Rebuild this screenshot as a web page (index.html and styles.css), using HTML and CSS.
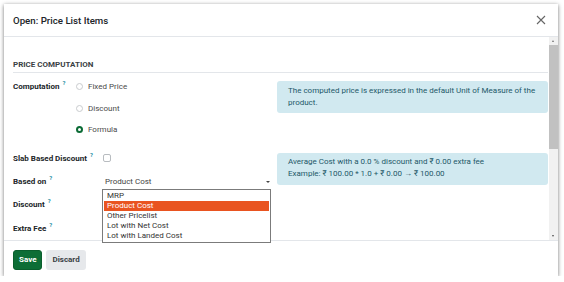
FILE: index.html
```html
<!DOCTYPE html>
<html lang="en">

<head>
  <meta charset="UTF-8">
  <title>Open: Price List Items</title>
  <link rel="stylesheet" href="styles.css">
</head>

<body>
  <div class="dialog">
    <header class="dialog-header">
      <h4 class="dialog-title">Open: Price List Items</h4>
      <button class="close-btn" aria-label="Close">
        <svg width="10" height="10" viewBox="0 0 10 10">
          <path d="M1 1 L9 9 M9 1 L1 9" stroke="#666" stroke-width="1.1" fill="none" />
        </svg>
      </button>
    </header>

    <div class="dialog-body">
      <main class="body-content">
        <div class="separator">Price Computation</div>

        <div class="group group-compute">
          <div class="fields">
            <div class="label-cell">Computation <sup class="help">?</sup></div>
            <div class="radio-list">
              <label class="radio"><span class="radio-dot"></span>Fixed Price</label>
              <label class="radio"><span class="radio-dot"></span>Discount</label>
              <label class="radio"><span class="radio-dot checked"></span>Formula</label>
            </div>
          </div>
          <div class="alert">
            The computed price is expressed in the default Unit of Measure of the product.
          </div>
        </div>

        <div class="group group-formula">
          <div class="fields form-grid">
            <div class="label-cell">Slab Based Discount <sup class="help">?</sup></div>
            <div class="value-cell"><span class="checkbox"></span></div>

            <div class="label-cell">Based on <sup class="help">?</sup></div>
            <div class="value-cell">
              <div class="select">Product Cost<span class="caret"></span></div>
            </div>

            <div class="label-cell">Discount <sup class="help">?</sup></div>
            <div class="value-cell"></div>

            <div class="label-cell">Extra Fee <sup class="help">?</sup></div>
            <div class="value-cell"></div>
          </div>
          <div class="alert alert-example">
            Average Cost with a 0.0 % discount and ₹ 0.00 extra fee<br>
            Example: ₹ 100.00 * 1.0 + ₹ 0.00 → ₹ 100.00
          </div>
        </div>
      </main>

      <div class="scrollbar">
        <span class="scroll-arrow up"></span>
        <span class="scroll-thumb"></span>
        <span class="scroll-track"></span>
        <span class="scroll-arrow down"></span>
      </div>
    </div>

    <footer class="dialog-footer">
      <button class="btn btn-primary">Save</button>
      <button class="btn btn-secondary">Discard</button>
    </footer>

    <ul class="select-popup">
      <li>MRP</li>
      <li class="active">Product Cost</li>
      <li>Other Pricelist</li>
      <li>Lot with Net Cost</li>
      <li>Lot with Landed Cost</li>
    </ul>
  </div>
</body>

</html>
```

FILE: styles.css
```css
* {
  box-sizing: border-box;
}

body {
  margin: 0;
  background-color: #ffffff;
  font-family: Roboto, "Liberation Sans", sans-serif;
  font-size: 8px;
  color: #212529;
}

.dialog {
  position: relative;
  margin: 4px 6px 0 4px;
  width: 554px;
  height: 272px;
  background-color: #fff;
  box-shadow: 0 1px 4px rgba(0, 0, 0, 0.55);
  display: flex;
  flex-direction: column;
}

.dialog-header {
  height: 33px;
  flex: none;
  display: flex;
  align-items: center;
  justify-content: space-between;
  padding: 0 12px 0 9px;
  border-bottom: 1px solid #e3e6ea;
}

.dialog-title {
  margin: 0;
  font-size: 9.7px;
  font-weight: 500;
  color: #212529;
}

.close-btn {
  border: none;
  background: none;
  padding: 0;
  display: flex;
}

.dialog-body {
  flex: none;
  height: 203px;
  display: flex;
}

.body-content {
  flex: 1;
  overflow: hidden;
  padding: 21px 0 0 9px;
}

.scrollbar {
  width: 9px;
  flex: none;
  display: flex;
  flex-direction: column;
  background: #f1f1f1;
}

.scroll-arrow {
  height: 8px;
  flex: none;
  position: relative;
}

.scroll-arrow::after {
  content: "";
  position: absolute;
  left: 3px;
  top: 3px;
  border-left: 1.5px solid transparent;
  border-right: 1.5px solid transparent;
}

.scroll-arrow.up::after {
  border-bottom: 2px solid #707070;
}

.scroll-arrow.down::after {
  border-top: 2px solid #505050;
}

.scroll-thumb {
  height: 104px;
  flex: none;
  background: #c1c1c1;
}

.scroll-track {
  flex: 1;
}

.separator {
  font-size: 8px;
  font-weight: 700;
  text-transform: uppercase;
  color: #3b3f44;
  line-height: 12px;
  padding-bottom: 1px;
  border-bottom: 1px solid #e3e6ea;
  margin-right: 1px;
  margin-top: 1px;
}

.group {
  display: grid;
  grid-template-columns: 264px 271px;
}

.label-cell {
  font-weight: 700;
  color: #212529;
}

.help {
  color: #1a8ea3;
  font-size: 6px;
  font-weight: 700;
  vertical-align: 4px;
  line-height: 0;
  margin-left: 1px;
}

.group-compute {
  margin-top: 3px;
}

.group-compute .fields {
  display: flex;
}

.group-compute .label-cell {
  width: 63px;
  line-height: 21.5px;
}

.radio-list {
  display: flex;
  flex-direction: column;
}

.radio {
  display: flex;
  align-items: center;
  height: 21.5px;
  color: #4a4a4a;
}

.radio-dot {
  width: 7px;
  height: 7px;
  border: 1px solid #c9cbce;
  border-radius: 50%;
  margin-right: 5px;
}

.radio-dot.checked {
  border: 2px solid #0b6b35;
}

.alert {
  background-color: #d1e9f0;
  color: #1d5868;
  border-radius: 3px;
  line-height: 11.5px;
  padding: 4px 11px;
  height: 32px;
}

.group-compute .alert {
  margin-top: 5px;
}

.group-formula {
  margin-top: 6px;
}

.form-grid {
  display: grid;
  grid-template-columns: 90px 1fr;
  grid-auto-rows: 23.3px;
  align-items: center;
}

.group-formula .alert-example {
  margin-top: 6px;
  line-height: 12px;
  padding-top: 3px;
}

.value-cell {
  display: flex;
  align-items: center;
  height: 100%;
}

.checkbox {
  width: 8px;
  height: 8px;
  border: 1px solid #b8bcc0;
  border-radius: 2px;
}

.select {
  position: relative;
  width: 169px;
  padding-left: 2px;
  margin-top: 1px;
  color: #444;
}

.caret {
  position: absolute;
  right: 2px;
  top: 4px;
  border-left: 2px solid transparent;
  border-right: 2px solid transparent;
  border-top: 2.5px solid #444;
}

.dialog-footer {
  flex: 1;
  border-top: 1px solid #e3e6ea;
  display: flex;
  align-items: flex-start;
  gap: 4px;
  padding: 9px 9px 0;
}

.btn {
  height: 20px;
  line-height: 18px;
  border-radius: 3px;
  font-family: Roboto, "Liberation Sans", sans-serif;
  font-size: 8px;
  font-weight: 700;
  padding: 0 5px;
  border: 1px solid transparent;
}

.btn-primary {
  background-color: #0d6e36;
  border-color: #0a5e2d;
  color: #fff;
}

.btn-secondary {
  background-color: #e6e8eb;
  color: #3a3f45;
}

.select-popup {
  position: absolute;
  left: 98px;
  top: 185px;
  width: 169px;
  margin: 0;
  padding: 1px 1px;
  list-style: none;
  background: #fff;
  border: 1px solid #7b7b7b;
  font-family: Roboto, "Liberation Sans", sans-serif;
  font-size: 8px;
  color: #333;
}

.select-popup li {
  height: 10px;
  line-height: 10px;
  padding-left: 3px;
}

.select-popup li.active {
  background-color: #e95420;
  color: #fff;
}
```
